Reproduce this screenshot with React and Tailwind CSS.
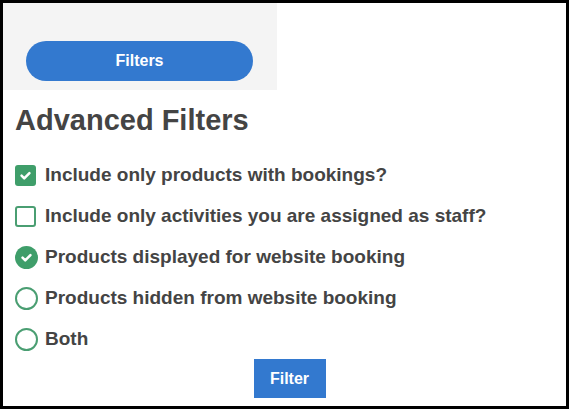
import React, { useState } from "react";

function CheckIcon({ className }) {
  return (
    <svg viewBox="0 0 16 16" className={className} fill="none" stroke="white" strokeWidth="2.4" strokeLinecap="round" strokeLinejoin="round">
      <path d="M4.3 8.2l2.5 2.5 4.9-5" />
    </svg>
  );
}

function Box({ checked }) {
  return checked ? (
    <span className="w-[21px] h-[21px] rounded-[3px] bg-[#3f9e6a] flex items-center justify-center shrink-0">
      <CheckIcon className="w-[17px] h-[17px]" />
    </span>
  ) : (
    <span className="w-[21px] h-[21px] rounded-[3px] border-2 border-[#4a9e72] bg-white shrink-0" />
  );
}

function Radio({ checked }) {
  return checked ? (
    <span className="w-[23px] h-[23px] rounded-full bg-[#3f9e6a] flex items-center justify-center shrink-0">
      <CheckIcon className="w-[17px] h-[17px]" />
    </span>
  ) : (
    <span className="w-[23px] h-[23px] rounded-full border-2 border-[#4a9e72] bg-white shrink-0" />
  );
}

export default function App() {
  const [bookings, setBookings] = useState(true);
  const [staff, setStaff] = useState(false);
  const [web, setWeb] = useState("displayed");

  const radios = [
    ["displayed", "Products displayed for website booking"],
    ["hidden", "Products hidden from website booking"],
    ["both", "Both"],
  ];

  return (
    <div className="w-[569px] h-[409px] border-[3px] border-black bg-white font-['Liberation_Sans',Arial,sans-serif] text-[#444]">
      <div className="w-[274px] h-[87px] bg-[#f4f4f4] pt-[38px] pl-[23px]">
        <button className="w-[227px] h-[40px] rounded-full bg-[#3379cf] text-white font-bold text-[16px]">Filters</button>
      </div>
      <div className="pl-[12px]">
        <h2 className="text-[29px] font-bold leading-none mt-[16px] text-[#444]">Advanced Filters</h2>
        <div className="mt-[20px] flex flex-col">
          <label className="flex items-center gap-[9px] h-[41px] cursor-pointer" onClick={() => setBookings(!bookings)}>
            <Box checked={bookings} />
            <span className="text-[19px] font-bold">Include only products with bookings?</span>
          </label>
          <label className="flex items-center gap-[9px] h-[41px] cursor-pointer" onClick={() => setStaff(!staff)}>
            <Box checked={staff} />
            <span className="text-[19px] font-bold">Include only activities you are assigned as staff?</span>
          </label>
          {radios.map(([k, t]) => (
            <label key={k} className="flex items-center gap-[7px] h-[41px] cursor-pointer" onClick={() => setWeb(k)}>
              <Radio checked={web === k} />
              <span className="text-[19px] font-bold">{t}</span>
            </label>
          ))}
        </div>
        <div className="flex justify-center mt-[-1px] pr-[2px]">
          <button className="w-[72px] h-[39px] bg-[#3379cf] text-white font-bold text-[16px]">Filter</button>
        </div>
      </div>
    </div>
  );
}
